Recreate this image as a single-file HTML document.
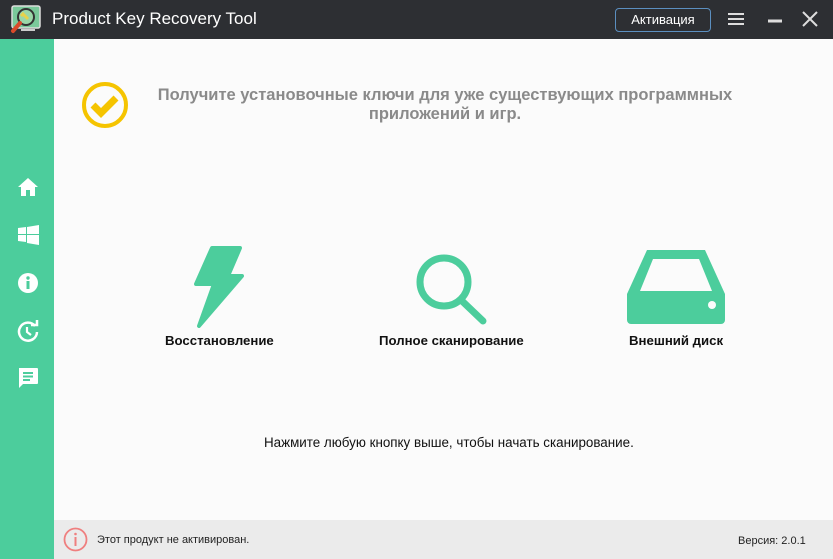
<!DOCTYPE html>
<html><head><meta charset="utf-8"><style>
*{margin:0;padding:0;box-sizing:border-box}
body{width:833px;height:559px;overflow:hidden;font-family:"Liberation Sans",sans-serif;background:#fbfbfb;position:relative}
.title{position:absolute;left:0;top:0;width:833px;height:39px;background:#2d2f33}
.title .t{position:absolute;left:52px;top:9px;color:#fff;font-size:17px}
.btn{position:absolute;left:615px;top:8px;width:96px;height:24px;border:1px solid #5b8fc0;border-radius:4px;color:#fff;font-size:13px;text-align:center;line-height:22px}
.side{position:absolute;left:0;top:39px;width:54px;height:520px;background:#4ccd9c}
.foot{position:absolute;left:54px;top:520px;width:779px;height:39px;background:#ebebeb;font-size:11px;color:#222}
.lbl{position:absolute;font-weight:bold;font-size:13px;color:#111;white-space:nowrap}
</style></head><body>
<div class="title">
<svg style="position:absolute;left:9px;top:5px" width="34" height="30" viewBox="0 0 34 30">
<rect x="3" y="1" width="28" height="22" rx="2" fill="#7ac99a" stroke="#ddd" stroke-width="1.5"/>
<circle cx="17" cy="12" r="8" fill="#9bd7a8" stroke="#333" stroke-width="2"/>
<path d="M13 8l6 6M15 8l-3 3" stroke="#e8d24a" stroke-width="3"/>
<path d="M11 18l-7 8" stroke="#d94a2a" stroke-width="4" stroke-linecap="round"/>
<rect x="12" y="24" width="14" height="2" fill="#ccc"/>
</svg>
<div class="t">Product Key Recovery Tool</div>
<div class="btn">Активация</div>
<svg style="position:absolute;left:727px;top:12px" width="18" height="14"><path d="M1 2h16M1 7h16M1 12h16" stroke="#ddd" stroke-width="2"/></svg>
<svg style="position:absolute;left:767px;top:18px" width="16" height="6"><path d="M1 3h14" stroke="#ddd" stroke-width="3"/></svg>
<svg style="position:absolute;left:802px;top:11px" width="16" height="16"><path d="M1 1l14 14M15 1L1 15" stroke="#ddd" stroke-width="2"/></svg>
</div>
<div class="side">
<svg style="position:absolute;left:17px;top:138px" width="22" height="20" viewBox="0 0 22 20"><path d="M11 1L1 10h3v9h5v-6h4v6h5v-9h3z" fill="#fff"/></svg>
<svg style="position:absolute;left:18px;top:186px" width="21" height="20" viewBox="0 0 21 20"><path d="M0 3l8-1v7H0zM9 2l12-2v9H9zM0 10h8v7l-8-1zM9 10h12v10l-12-2z" fill="#fff"/></svg>
<svg style="position:absolute;left:17px;top:233px" width="22" height="22" viewBox="0 0 22 22"><circle cx="11" cy="11" r="10" fill="#fff"/><rect x="9.5" y="9" width="3" height="8" fill="#4ccd9c"/><circle cx="11" cy="6" r="1.7" fill="#4ccd9c"/></svg>
<svg style="position:absolute;left:17px;top:281px" width="22" height="22" viewBox="0 0 22 22"><path d="M18 6A9 9 0 1 0 20 12" fill="none" stroke="#fff" stroke-width="2.5"/><path d="M14 5h6V0" fill="none" stroke="#fff" stroke-width="2.5"/><path d="M10 7v5l4 3" fill="none" stroke="#fff" stroke-width="2.2"/></svg>
<svg style="position:absolute;left:17px;top:328px" width="22" height="22" viewBox="0 0 22 22"><path d="M2 1h18a1 1 0 0 1 1 1v14a1 1 0 0 1-1 1H6l-4 4z" fill="#fff"/><path d="M6 6h10M6 9.5h10M6 13h7" stroke="#4ccd9c" stroke-width="2"/></svg>
</div>
<svg style="position:absolute;left:81px;top:81px" width="48" height="48" viewBox="0 0 48 48"><circle cx="24" cy="24" r="21" fill="none" stroke="#f5c400" stroke-width="4"/><path d="M12 24l8 8 15-15" fill="none" stroke="#f5c400" stroke-width="7"/></svg>
<div style="position:absolute;left:130px;top:86px;width:630px;text-align:center;font-weight:bold;font-size:16.5px;color:#8a8a8a;line-height:19px">Получите установочные ключи для уже существующих программных<br>приложений и игр.</div>
<svg style="position:absolute;left:190px;top:246px" width="56" height="82" viewBox="0 0 56 82"><path d="M22 2h28L38 30h14L9 80l15-42H6z" fill="#4ccd9c" stroke="#4ccd9c" stroke-width="4" stroke-linejoin="round"/></svg>
<div class="lbl" style="left:165px;top:333px;font-size:13.2px">Восстановление</div>
<svg style="position:absolute;left:414px;top:250px" width="76" height="76" viewBox="0 0 76 76"><circle cx="30" cy="32" r="24" fill="none" stroke="#4ccd9c" stroke-width="7"/><path d="M47 50l22 21" stroke="#4ccd9c" stroke-width="7" stroke-linecap="round"/></svg>
<div class="lbl" style="left:379px;top:333px;font-size:13.2px">Полное сканирование</div>
<svg style="position:absolute;left:627px;top:250px" width="98" height="74" viewBox="0 0 98 74"><path d="M20 0h58l20 44v26a4 4 0 0 1-4 4H4a4 4 0 0 1-4-4V44z" fill="#4ccd9c"/><path d="M26 9h46l13 32H13z" fill="#fbfbfb"/><circle cx="85" cy="55" r="4" fill="#fbfbfb"/></svg>
<div class="lbl" style="left:629px;top:333px;font-size:13.2px">Внешний диск</div>
<div style="position:absolute;left:264px;top:435px;white-space:nowrap;font-size:13.4px;color:#111">Нажмите любую кнопку выше, чтобы начать сканирование.</div>
<div class="foot">
<svg style="position:absolute;left:9px;top:7px" width="25" height="25" viewBox="0 0 25 25"><circle cx="12.5" cy="12.5" r="11" fill="none" stroke="#ef7f7f" stroke-width="1.8"/><rect x="11.5" y="10" width="2" height="9" fill="#ef7f7f"/><circle cx="12.5" cy="7" r="1.3" fill="#ef7f7f"/></svg>
<div style="position:absolute;left:43px;top:14px">Этот продукт не активирован.</div>
<div style="position:absolute;left:684px;top:15px">Версия: 2.0.1</div>
</div>
</body></html>
